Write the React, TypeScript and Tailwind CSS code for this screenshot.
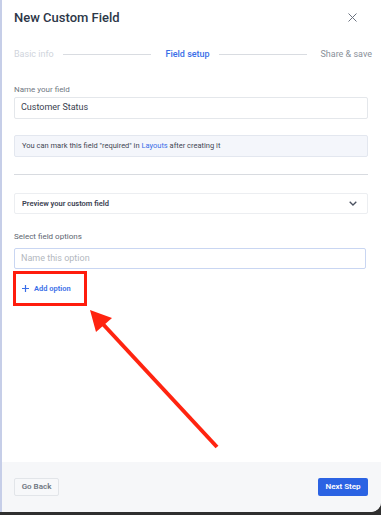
import * as React from 'react';

const Arrow = () => (
  <svg
    className="absolute left-0 top-0 pointer-events-none"
    width="381"
    height="515"
    viewBox="0 0 381 515"
  >
    <line x1="217" y1="447" x2="101" y2="322" stroke="#ff2410" strokeWidth="4" />
    <polygon points="90,310 96,332 112,318" fill="#ff2410" />
  </svg>
);

export default function App(): JSX.Element {
  return (
    <div className="relative w-[381px] h-[515px] bg-[#2f2f2f] overflow-hidden font-['Roboto',sans-serif]">
      <div className="flex flex-col h-[512px] bg-white rounded-br-[10px] border-l-2 border-[#c6cee8] overflow-hidden">
        {/* content */}
        <div className="flex-1 flex flex-col pl-[12px] pr-[13px]">
          <div className="flex items-center justify-between pt-[10px] pr-[11px]">
            <h1 className="text-[13px] leading-[15px] font-medium text-[#2d3748]">
              New Custom Field
            </h1>
            <svg width="9" height="9" viewBox="0 0 9 9" className="text-[#6b7280]">
              <path d="M0.5 0.5 L8.5 8.5 M8.5 0.5 L0.5 8.5" stroke="currentColor" strokeWidth="1" />
            </svg>
          </div>

          <div className="flex items-center mt-[23px] -mr-[4px] text-[9px] leading-[12px]">
            <span className="text-[#cfd4dc]">Basic info</span>
            <div className="flex-1 h-px ml-[9px] mr-[14px] bg-[#d9dce1]" />
            <span className="text-[#3a6ee8] font-medium">Field setup</span>
            <div className="flex-1 h-px ml-[9px] mr-[13px] bg-[#d9dce1]" />
            <span className="text-[#8a9099]">Share &amp; save</span>
          </div>

          <label className="mt-[25px] text-[8px] leading-[10px] text-[#6f7782]">
            Name your field
          </label>
          <div className="mt-[2px] h-[22px] flex items-center px-[6px] border border-[#e4e7eb] rounded-[2px] text-[9px] text-[#3a4150]">
            Customer Status
          </div>

          <div className="mt-[16px] h-[22px] flex items-center px-[7px] bg-[#f4f6fb] border border-[#e3e7ef] rounded-[2px] text-[7.5px] text-[#3f4654]">
            You can mark this field "required" in&nbsp;
            <span className="text-[#3a6ee8]">Layouts</span>&nbsp;after creating it
          </div>

          <div className="mt-[17px] h-px bg-[#d8dbe0]" />

          <div className="mt-[18px] h-[21px] flex items-center justify-between pl-[7px] pr-[10px] border border-[#eceef1] rounded-[2px]">
            <span className="text-[7.5px] font-semibold text-[#3a4150]">
              Preview your custom field
            </span>
            <svg width="8" height="5" viewBox="0 0 8 5">
              <path d="M0.7 0.7 L4 4 L7.3 0.7" fill="none" stroke="#4a5160" strokeWidth="1.3" />
            </svg>
          </div>

          <label className="mt-[18px] text-[8px] leading-[10px] text-[#5d6570]">
            Select field options
          </label>
          <div className="mt-[6px] mr-[2px] h-[21px] flex items-center px-[6px] border border-[#c9d6f2] rounded-[2px] text-[9px] text-[#b3b8c0]">
            Name this option
          </div>

          <div className="mt-[2px] -ml-[1px] w-[74px] h-[35px] border-[3px] border-[#ff1d0d] flex items-center pl-[6px] gap-[5px] text-[7.5px] font-semibold text-[#3a6ee8]">
            <svg width="7" height="7" viewBox="0 0 7 7">
              <path d="M3.5 0 V7 M0 3.5 H7" stroke="#3a6ee8" strokeWidth="1.2" />
            </svg>
            Add option
          </div>
        </div>

        {/* footer */}
        <div className="h-[50px] flex items-center justify-between pl-[12px] pr-[13px] bg-[#f6f7f9]">
          <button className="h-[18px] w-[45px] flex items-center justify-center bg-[#f7f8fa] border border-[#e2e5e9] rounded-[2px] text-[8px] font-semibold text-[#707782]">
            Go Back
          </button>
          <button className="h-[18px] w-[50px] flex items-center justify-center bg-[#2b63e3] rounded-[2px] text-[8px] font-semibold text-white">
            Next Step
          </button>
        </div>
      </div>
      <Arrow />
    </div>
  );
}
